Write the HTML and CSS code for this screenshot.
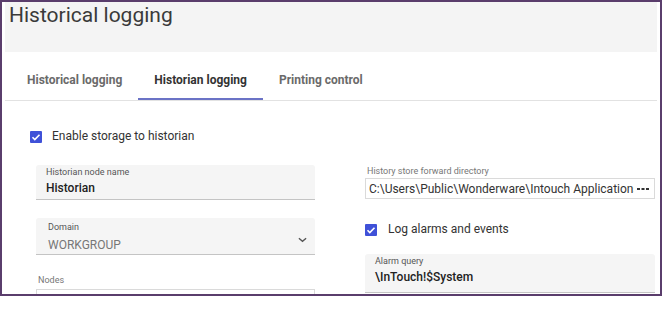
FILE: index.html
```html
<!DOCTYPE html>
<html lang="en">
<head>
    <meta charset="UTF-8">
    <title>Historical logging</title>
    <link rel="stylesheet" href="styles.css">
</head>
<body>
    <div class="frame">
        <div class="page-header">
            <h1>Historical logging</h1>
        </div>

        <div class="tabs">
            <div class="tab">Historical logging</div>
            <div class="tab active">Historian logging</div>
            <div class="tab">Printing control</div>
        </div>

        <div class="content">
            <label class="check">
                <span class="box">
                    <svg viewBox="0 0 12 12" width="12" height="12"><path d="M2.5 6.2l2.3 2.3 4.7-4.8" fill="none" stroke="#fff" stroke-width="1.6"/></svg>
                </span>
                Enable storage to historian
            </label>

            <div class="columns">
                <div class="col left">
                    <div class="field">
                        <div class="field-label">Historian node name</div>
                        <div class="field-value">Historian</div>
                    </div>

                    <div class="field select">
                        <div class="field-label">Domain</div>
                        <div class="field-value muted">WORKGROUP</div>
                        <svg class="chevron" viewBox="0 0 10 6" width="9" height="6"><path d="M1 1l4 3.5L9 1" fill="none" stroke="#555" stroke-width="1.5"/></svg>
                    </div>

                    <div class="plain-label nodes-label">Nodes</div>
                    <div class="outlined nodes-box"></div>
                </div>

                <div class="col right">
                    <div class="plain-label">History store forward directory</div>
                    <div class="outlined path">
                        <span class="path-text">C:\Users\Public\Wonderware\Intouch Applications\Historian</span>
                        <svg class="dots" viewBox="0 0 12 4" width="12" height="4"><rect x="0" y="1" width="3" height="2" fill="#333"/><rect x="4.5" y="1" width="3" height="2" fill="#333"/><rect x="9" y="1" width="3" height="2" fill="#333"/></svg>
                    </div>

                    <label class="check small">
                        <span class="box">
                            <svg viewBox="0 0 12 12" width="12" height="12"><path d="M2.5 6.2l2.3 2.3 4.7-4.8" fill="none" stroke="#fff" stroke-width="1.6"/></svg>
                        </span>
                        Log alarms and events
                    </label>

                    <div class="field alarm">
                        <div class="field-label">Alarm query</div>
                        <div class="field-value">\InTouch!$System</div>
                    </div>
                </div>
            </div>
        </div>
    </div>
</body>
</html>
```

FILE: styles.css
```css
body {
    margin: 0;
    background: #fff;
    font-family: Roboto, "Liberation Sans", Arial, sans-serif;
    color: #333;
}

.frame {
    width: 658px;
    height: 292px;
    border: 2px solid #5a3d6c;
    overflow: hidden;
    background: #fff;
}

.page-header {
    margin: 0 3px;
    height: 50px;
    background: #f4f4f4;
}

h1 {
    margin: 0;
    padding: 1px 0 0 4px;
    font-size: 21px;
    font-weight: 400;
    color: #3a3a3a;
}

.tabs {
    display: flex;
    margin: 0 3px;
    height: 48px;
    border-bottom: 1px solid #e2e2e2;
    padding-left: 6px;
}

.tab {
    padding: 21px 16px 0;
    font-size: 12px;
    line-height: 14px;
    font-weight: 700;
    color: #6a6a6a;
    box-sizing: border-box;
    height: 48px;
}

.tab.active {
    color: #333;
    border-bottom: 2px solid #6b73c6;
}

.content {
    padding: 0 0 0 28px;
}

.check {
    display: flex;
    align-items: center;
    gap: 10px;
    margin-top: 28px;
    font-size: 12px;
    line-height: 15px;
    color: #333;
}

.box {
    display: inline-flex;
    align-items: center;
    justify-content: center;
    width: 12px;
    height: 12px;
    background: #3f51d8;
    border-radius: 1px;
}

.columns {
    display: grid;
    grid-template-columns: 279px 290px;
    column-gap: 50px;
    margin-top: 21px;
    padding-left: 6px;
}

.col {
    display: flex;
    flex-direction: column;
}

.field {
    position: relative;
    background: #f5f5f5;
    border-bottom: 1px solid #c4c4c4;
    border-radius: 3px 3px 0 0;
    padding: 2px 10px 4px;
}

.field-label {
    font-size: 9px;
    line-height: 11px;
    color: #555;
}

.field-value {
    margin-top: 3px;
    font-size: 12px;
    line-height: 14px;
    font-weight: 500;
    color: #222;
}

.field-value.muted {
    color: #777;
    font-weight: 400;
}

.select {
    margin-top: 18px;
    padding: 4px 12px 2px;
}

.select .field-value {
    margin-top: 5px;
}

.chevron {
    position: absolute;
    right: 8px;
    top: 19px;
}

.plain-label {
    font-size: 9px;
    line-height: 11px;
    color: #777;
    padding-left: 2px;
}

.nodes-label {
    margin-top: 20px;
}

.outlined {
    border: 1px solid #dadada;
    background: #fff;
}

.nodes-box {
    margin-top: 3px;
    height: 24px;
}

.right .plain-label {
    margin-top: 1px;
}

.path {
    display: flex;
    align-items: center;
    margin-top: 1px;
    height: 19px;
    padding: 0 3px;
}

.path-text {
    flex: 1;
    overflow: hidden;
    white-space: nowrap;
    font-size: 12px;
    color: #333;
}

.dots {
    margin: 0 2px 0 3px;
}

.check.small {
    margin-top: 23px;
    gap: 11px;
}

.alarm {
    margin-top: 17px;
    padding: 2px 10px 8px;
}
```
